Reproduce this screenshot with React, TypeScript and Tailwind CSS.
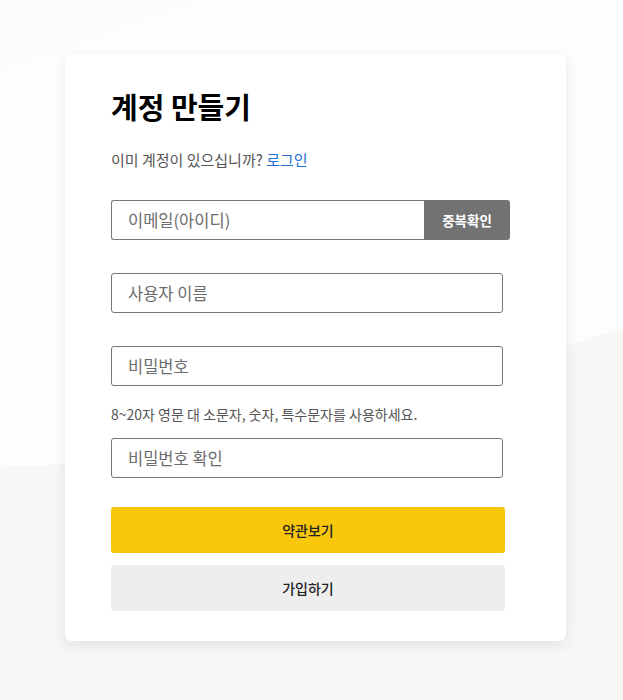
import React from "react";

const font = { fontFamily: '"Noto Sans CJK KR", "Noto Sans", sans-serif' };

function Field({ placeholder, className = "" }: { placeholder: string; className?: string }) {
  return (
    <input
      placeholder={placeholder}
      className={`block h-[40px] w-[392px] rounded-[3px] border border-[#777777] bg-white pl-[16px] text-[16.5px] text-[#333] outline-none placeholder:text-[#6b6b6b] ${className}`}
      style={font}
    />
  );
}

export default function App() {
  return (
    <div className="relative min-h-[700px] w-full overflow-hidden bg-[#fdfdfd]" style={font}>
      <svg className="absolute inset-0 h-[700px] w-full" viewBox="0 0 623 700" preserveAspectRatio="none">
        <path d="M0,0 L200,0 C140,20 70,45 0,70 Z" fill="#fbfbfb" />
        <path d="M0,467 C240,462 440,385 623,328 L623,700 L0,700 Z" fill="#f8f7f5" />
      </svg>
      <div className="relative pt-[54px]">
        <div className="ml-[65px] w-[501px] rounded-[6px] bg-white pl-[46px] pt-[32px] pb-[30px] shadow-[0_4px_14px_rgba(0,0,0,0.09)]">
          <h1 className="text-[29px] font-bold leading-[40px] text-black">계정 만들기</h1>
          <p className="mt-[24px] text-[15px] leading-[20px] text-[#555]">
            이미 계정이 있으십니까? <a className="text-[#1e6fd1]">로그인</a>
          </p>
          <div className="mt-[30px] flex h-[40px] w-[399px]">
            <input
              placeholder="이메일(아이디)"
              className="block h-[40px] w-[313px] rounded-l-[3px] border border-r-0 border-[#777777] bg-white pl-[16px] text-[16.5px] outline-none placeholder:text-[#6b6b6b]"
              style={font}
            />
            <button className="h-[40px] w-[86px] rounded-r-[3px] bg-[#727272] text-[13.5px] font-bold text-white">
              중복확인
            </button>
          </div>
          <Field placeholder="사용자 이름" className="mt-[33px]" />
          <Field placeholder="비밀번호" className="mt-[33px]" />
          <p className="mt-[18px] text-[14px] leading-[20px] text-[#555]">
            8~20자 영문 대 소문자, 숫자, 특수문자를 사용하세요.
          </p>
          <Field placeholder="비밀번호 확인" className="mt-[14px]" />
          <button className="mt-[29px] block h-[46px] w-[394px] rounded-[3px] bg-[#f9c70b] text-[14px] font-medium text-[#222]">
            약관보기
          </button>
          <button className="mt-[12px] block h-[46px] w-[394px] rounded-[3px] bg-[#eeeeee] text-[14px] font-medium text-[#222]">
            가입하기
          </button>
        </div>
      </div>
    </div>
  );
}
